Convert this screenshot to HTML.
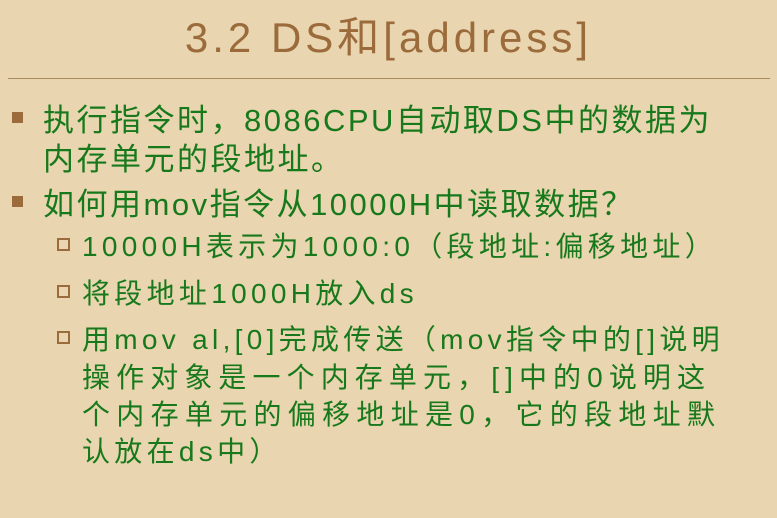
<!DOCTYPE html>
<html><head><meta charset="utf-8"><style>
body{margin:0;width:777px;height:518px;background:#e9d5af;overflow:hidden;position:relative;font-family:"Liberation Sans","Noto Sans CJK SC",sans-serif}
.t{position:absolute;left:0;width:777px;text-align:center;top:4px;font-size:42px;color:#9b6b3b;letter-spacing:4px}
.hr{position:absolute;left:8px;width:762px;top:78px;height:1px;background:#a88a60}
.l{position:absolute;color:#17791b;white-space:nowrap}
.b{font-size:31px;left:43px;letter-spacing:2.5px}
.s{font-size:28px;left:82px;letter-spacing:4.3px}
.sq{position:absolute;left:12px;width:11px;height:11px;background:#9b6b3b}
.so{position:absolute;left:57px;width:9px;height:9px;border:2px solid #9b6b3b}
</style></head><body>
<div class="t">3.2 DS和[address]</div>
<div class="hr"></div>
<div class="sq" style="top:112px"></div>
<div class="l b" style="top:95px">执行指令时，8086CPU自动取DS中的数据为</div>
<div class="l b" style="top:134px">内存单元的段地址。</div>
<div class="sq" style="top:196px"></div>
<div class="l b" style="top:179px">如何用mov指令从10000H中读取数据？</div>
<div class="so" style="top:238px"></div>
<div class="l s" style="top:225px">10000H表示为1000:0（段地址:偏移地址）</div>
<div class="so" style="top:285px"></div>
<div class="l s" style="top:272px">将段地址1000H放入ds</div>
<div class="so" style="top:331px"></div>
<div class="l s" style="top:318px">用mov al,[0]完成传送（mov指令中的[]说明</div>
<div class="l s" style="top:356px;letter-spacing:6.1px">操作对象是一个内存单元，[]中的0说明这</div>
<div class="l s" style="top:393px;letter-spacing:6.3px">个内存单元的偏移地址是0，它的段地址默</div>
<div class="l s" style="top:430px">认放在ds中）</div>
</body></html>
